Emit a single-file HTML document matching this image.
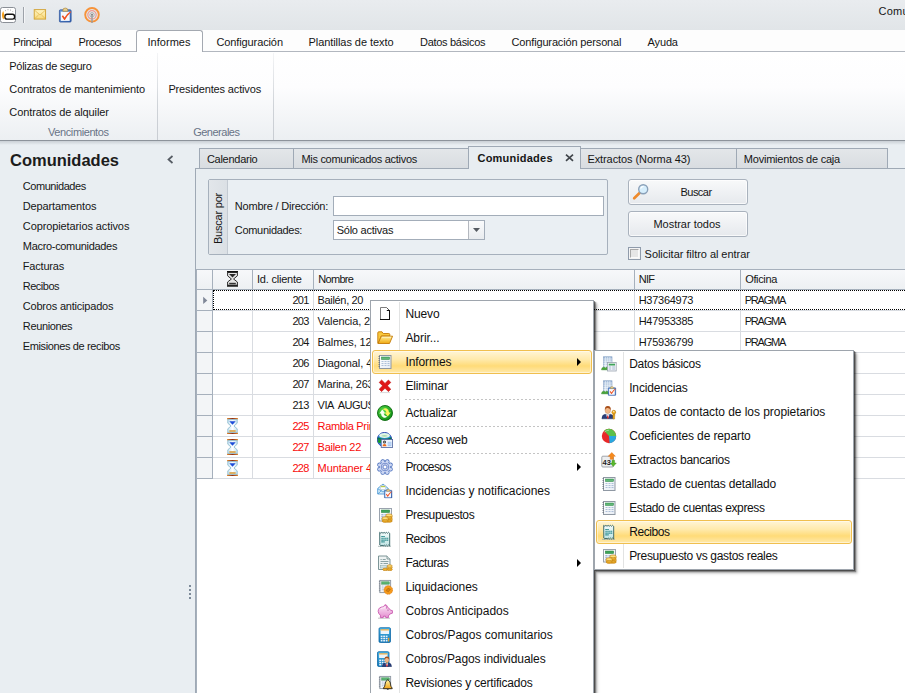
<!DOCTYPE html>
<html>
<head>
<meta charset="utf-8">
<style>
html,body{margin:0;padding:0;}
body{width:905px;height:693px;overflow:hidden;position:relative;background:#e9eef2;font-family:"Liberation Sans",sans-serif;font-size:11px;color:#161616;}
.abs{position:absolute;}
.ic{position:absolute;overflow:visible;}
.t{position:absolute;white-space:nowrap;line-height:14px;height:14px;font-size:11px;}
#topbar{left:0;top:0;width:905px;height:30px;background:linear-gradient(#e9ecef,#e1e5e8);}
#tabrow{left:0;top:30px;width:905px;height:21px;background:#fdfdfd;border-bottom:1px solid #b2b7bf;}
#acttab{left:136px;top:30px;width:65px;height:22px;background:#fff;border:1px solid #a4a9b1;border-bottom:none;border-radius:3px 3px 0 0;}
#ribbon{left:0;top:52px;width:905px;height:88px;background:linear-gradient(#ffffff 0%,#fdfdfe 40%,#eceff2 100%);border-bottom:1px solid #8d939b;}
.rsep{position:absolute;top:53px;width:1px;height:87px;background:linear-gradient(rgba(200,205,211,0.2),#cfd3d8 60%,#c8ccd2);}
.glabel{color:#687386;}
#nav{left:0;top:141px;width:195px;height:552px;background:#e9eef2;}
.navtitle{font-size:16.5px;font-weight:bold;line-height:20px;height:20px;color:#1c1c1c;}
#panel{left:195px;top:168px;width:710px;height:525px;background:#e8edf1;border-left:1px solid #9fa9b5;border-top:1px solid #9fa9b5;}
.dtab{position:absolute;top:148px;height:20px;background:linear-gradient(#e3e6e9,#d9dde1);border:1px solid #9fa9b5;border-bottom:none;box-sizing:border-box;}
#dtabact{position:absolute;left:468px;top:146px;width:113px;height:23px;background:#e8edf1;border:1px solid #9fa9b5;border-bottom:none;box-sizing:border-box;}
#grp{left:208px;top:179px;width:400px;height:76px;border:1px solid #a6b0bc;box-sizing:border-box;background:#eaeff3;border-radius:2px;}
#grpcap{left:209px;top:180px;width:19px;height:74px;background:linear-gradient(90deg,#e2e6ea,#dbe0e5);border-right:1px solid #c3cad2;box-sizing:border-box;}
.inp{position:absolute;background:#fff;border:1px solid #a3adb9;box-sizing:border-box;}
.btn{position:absolute;border:1px solid #a9b2bd;border-radius:3px;box-sizing:border-box;background:linear-gradient(#f8f9fa,#e6e9ed);box-shadow:inset 0 0 0 1px rgba(255,255,255,0.7);}
#grid{left:196px;top:269px;width:709px;height:424px;background:#fff;border-left:1px solid #a6b0bc;box-sizing:border-box;}
.gh{position:absolute;top:269px;height:21px;background:linear-gradient(#f7f8fa,#edf0f3);border-right:1px solid #a6b0bc;border-bottom:1px solid #a6b0bc;border-top:1px solid #a6b0bc;box-sizing:border-box;}
.hl{position:absolute;left:213px;width:692px;height:1px;background:#d9dce1;}
.vl{position:absolute;top:290px;width:1px;height:189px;background:#d9dce1;}
.red{color:#f80a0a;}
.ind{position:absolute;left:197px;width:16px;height:21px;background:#f3f5f7;border-right:1px solid #a6b0bc;border-bottom:1px solid #a6b0bc;box-sizing:border-box;}
.focus{position:absolute;left:213px;top:290px;width:692px;height:20px;border:1px dotted #000;border-right:none;box-sizing:border-box;}
.menu{position:absolute;background:#fff;border:1px solid #9ea5ad;box-sizing:border-box;box-shadow:1px 1px 0 rgba(0,0,0,0.40),2px 2px 1px rgba(0,0,0,0.30),3px 3px 2px rgba(0,0,0,0.20),4px 4px 3px rgba(0,0,0,0.10);}
.mi{position:absolute;font-size:12px;line-height:16px;height:16px;white-space:nowrap;color:#111;}
.msep{position:absolute;height:1px;background:repeating-linear-gradient(90deg,#c4c4c4 0,#c4c4c4 2px,transparent 2px,transparent 4px);}
.mhl{position:absolute;border:1px solid #f0bf4e;border-radius:3px;box-sizing:border-box;background:linear-gradient(#fff5d6 0%,#ffeaac 38%,#ffdb78 68%,#ffe9ab 100%);box-shadow:inset 0 0 0 1px rgba(255,255,255,0.45);}
.arrow{position:absolute;width:0;height:0;border-left:4px solid #000;border-top:4px solid transparent;border-bottom:4px solid transparent;}

.vtext{position:absolute;white-space:nowrap;font-size:11px;line-height:14px;height:14px;transform-origin:0 0;transform:rotate(-90deg);}
.cbtn{position:absolute;left:468px;top:221px;width:16px;height:18px;background:linear-gradient(#fafbfc,#e9ecef);border-left:1px solid #b4b8bf;box-sizing:border-box;}
.chk{position:absolute;left:628px;top:247px;width:13px;height:13px;box-sizing:border-box;border:1px solid #8f9bab;background:#f4f4f4;}
.chk i{position:absolute;left:1px;top:1px;width:9px;height:9px;box-sizing:border-box;background:#e6e6e6;border-top:1px solid #a8a8a8;border-left:1px solid #a8a8a8;border-right:1px solid #fafafa;border-bottom:1px solid #fafafa;}
#ribshadow{left:0;top:141px;width:905px;height:4px;background:linear-gradient(rgba(120,128,138,0.28),rgba(120,128,138,0));}
</style>
</head>
<body>
<svg width="0" height="0" style="position:absolute">
<defs>
<linearGradient id="gFold" x1="0" y1="0" x2="0" y2="1"><stop offset="0" stop-color="#fff09a"/><stop offset="1" stop-color="#f0a810"/></linearGradient>
<linearGradient id="gGold" x1="0" y1="0" x2="0" y2="1"><stop offset="0" stop-color="#fff6a8"/><stop offset="1" stop-color="#f2a418"/></linearGradient>
<linearGradient id="gBlue" x1="0" y1="0" x2="0" y2="1"><stop offset="0" stop-color="#49b4e6"/><stop offset="1" stop-color="#1279b8"/></linearGradient>
<linearGradient id="gSheet" x1="0" y1="0" x2="1" y2="1"><stop offset="0" stop-color="#ffffff"/><stop offset="1" stop-color="#e6ecf4"/></linearGradient>
<radialGradient id="gGreen" cx="0.4" cy="0.35" r="0.7"><stop offset="0" stop-color="#5fe04a"/><stop offset="1" stop-color="#0a8a12"/></radialGradient>
<linearGradient id="gClip" x1="0" y1="0" x2="1" y2="1"><stop offset="0" stop-color="#6ea0dc"/><stop offset="1" stop-color="#2f5fae"/></linearGradient>
<linearGradient id="gBld" x1="0" y1="0" x2="0" y2="1"><stop offset="0" stop-color="#9db7d8"/><stop offset="1" stop-color="#dfe8f3"/></linearGradient>
<linearGradient id="gPig" x1="0" y1="0" x2="0" y2="1"><stop offset="0" stop-color="#fdeaf8"/><stop offset="1" stop-color="#e48fd0"/></linearGradient>
<linearGradient id="gRec" x1="0" y1="0" x2="0" y2="1"><stop offset="0" stop-color="#f4fbfb"/><stop offset="1" stop-color="#bfe4e4"/></linearGradient>
<linearGradient id="gEnv" x1="0" y1="0" x2="0" y2="1"><stop offset="0" stop-color="#fff6c8"/><stop offset="1" stop-color="#f8d878"/></linearGradient>
<linearGradient id="gHg" x1="0" y1="0" x2="1" y2="0"><stop offset="0" stop-color="#c8e4f2"/><stop offset="0.5" stop-color="#ffffff"/><stop offset="1" stop-color="#c8e4f2"/></linearGradient>
<linearGradient id="gBar" x1="0" y1="0" x2="1" y2="0"><stop offset="0" stop-color="#e08a2e"/><stop offset="0.5" stop-color="#8e2f18"/><stop offset="1" stop-color="#e08a2e"/></linearGradient>

<symbol id="i-new" viewBox="0 0 16 16"><path d="M3.500 1.500h6l3 3v8.500h-9z" fill="#fff" stroke="none"/><path d="M3.500 13V1.500h6" fill="none" stroke="#7d7d7d" stroke-width="1"/><path d="M9.500 1.500l3 3" stroke="#555" stroke-width="1" fill="none"/><path d="M9.800 4.500h2.700" stroke="#111" stroke-width="1"/><path d="M3 13.500h10M12.500 4v10" stroke="#111" stroke-width="1" fill="none"/></symbol>

<symbol id="i-open" viewBox="0 0 16 16"><path d="M0.800 13.200V2.800q0-1 1-1h3.200l1.200 1.700h5.600q1 0 1 1V6H4.200L1.400 13.200z" fill="#f9c83c" stroke="#c47a08" stroke-width="0.900"/><path d="M1.100 13.500L4.300 6.200h11.300l-3.100 7.300z" fill="url(#gFold)" stroke="#c47a08" stroke-width="0.900"/><path d="M5 7.200h9" stroke="#fff8d0" stroke-width="0.800"/></symbol>

<symbol id="i-report" viewBox="0 0 16 16"><rect x="2.500" y="1.500" width="11.500" height="13" fill="url(#gSheet)" stroke="#8f98a3" stroke-width="1"/><path d="M1.500 2.500h1.500M1.500 4.500h1.500M1.500 6.500h1.500M1.500 8.500h1.500M1.500 10.500h1.500M1.500 12.500h1.500" stroke="#6f7782" stroke-width="0.900"/><rect x="4.500" y="3" width="8" height="2.500" fill="#49a862" stroke="#2f8a48" stroke-width="0.500"/><path d="M5 4.200h7" stroke="#8ad09c" stroke-width="0.600"/><path d="M4.500 7.500h2M7.500 7.500h2M10.500 7.500h2M4.500 9.500h2M7.500 9.500h2M10.500 9.500h2M4.500 11.500h2M7.500 11.500h2M10.500 11.500h2" stroke="#9db2d0" stroke-width="0.800"/></symbol>

<symbol id="i-del" viewBox="0 0 16 16"><path d="M2.2 4.4L4.6 2 8 5.4 11.4 2l2.4 2.4L10.4 7.8l3.4 3.4-2.4 2.4L8 10.2l-3.4 3.4-2.4-2.4L5.6 7.8z" fill="#e01818" stroke="#c00d0d" stroke-width="0.6"/><path d="M3 14.6h10" stroke="#cfcfcf" stroke-width="0.8"/></symbol>

<symbol id="i-refresh" viewBox="0 0 16 16"><circle cx="8" cy="8" r="7.500" fill="url(#gGreen)" stroke="#0b6a10" stroke-width="0.900"/><path d="M2.300 8.600L5.300 4.600 8.300 8.600H6.600Q7 11 10.200 11.400 8.600 13.200 6.400 12.400 4 11.400 4 8.600z" fill="#f6fff0"/><path d="M13.700 7.400L10.700 11.400 7.700 7.400H9.400Q9 5 5.800 4.600 7.400 2.800 9.600 3.600 12 4.600 12 7.400z" fill="#fff45e"/></symbol>

<symbol id="i-web" viewBox="0 0 16 16"><circle cx="7.500" cy="7.600" r="7.200" fill="#2b93dc" stroke="#2a3fae" stroke-width="0.900"/><path d="M1 5.200Q7.500 8.200 14 5.200q.6 1.200.6 2.600H.400q0-1.400.600-2.600z" fill="#0b7444"/><circle cx="2.800" cy="9.200" r="1.900" fill="#169a28"/><ellipse cx="7.500" cy="3.500" rx="5.400" ry="2.500" fill="#e2f5e6"/><path d="M4 3.900q3.500-1.800 7 0-3.500 1.600-7 0z" fill="#a8dcb0"/><rect x="4.200" y="7.400" width="11.400" height="8" fill="#eef4fc" stroke="#4d629c" stroke-width="0.800"/><circle cx="7.500" cy="10.100" r="1.500" fill="#3a3a3a"/><circle cx="7.500" cy="10" r="0.600" fill="#ddd"/><path d="M5.500 14.300q0-2.400 2-2.400t2 2.400z" fill="#ee6a18"/><rect x="10.700" y="9.800" width="3.700" height="4.400" fill="#a4c6f0"/><path d="M10.700 11h3.700M10.700 12.300h3.700" stroke="#dce9fa" stroke-width="0.500"/></symbol>

<symbol id="i-gear" viewBox="0 0 16 16"><g fill="#3f66b8" stroke="#3f66b8" stroke-width="1.400"><circle cx="13.45" cy="10.26" r="1.600"/><circle cx="10.26" cy="13.45" r="1.600"/><circle cx="5.74" cy="13.45" r="1.600"/><circle cx="2.55" cy="10.26" r="1.600"/><circle cx="2.55" cy="5.74" r="1.600"/><circle cx="5.74" cy="2.55" r="1.600"/><circle cx="10.26" cy="2.55" r="1.600"/><circle cx="13.45" cy="5.74" r="1.600"/><circle cx="8" cy="8" r="5.200"/></g><g fill="#cbd6f2"><circle cx="13.45" cy="10.26" r="1.600"/><circle cx="10.26" cy="13.45" r="1.600"/><circle cx="5.74" cy="13.45" r="1.600"/><circle cx="2.55" cy="10.26" r="1.600"/><circle cx="2.55" cy="5.74" r="1.600"/><circle cx="5.74" cy="2.55" r="1.600"/><circle cx="10.26" cy="2.55" r="1.600"/><circle cx="13.45" cy="5.74" r="1.600"/><circle cx="8" cy="8" r="5.300"/></g><circle cx="8" cy="8" r="3.800" fill="#eef1fb" stroke="#5574c0" stroke-width="0.800"/><circle cx="8" cy="8" r="2.300" fill="#b4c2ea" stroke="#5574c0" stroke-width="0.700"/><rect x="7" y="7" width="2" height="2" fill="#fff"/></symbol>

<symbol id="i-clip" viewBox="0 0 16 16"><rect x="1.500" y="2.500" width="12.500" height="13" rx="1" fill="url(#gClip)" stroke="#2a4f9a" stroke-width="0.800"/><rect x="3" y="4.500" width="9.500" height="9.800" fill="#f6f8fc"/><path d="M5.200 2.800q0-2.200 2.600-2.200t2.600 2.200v1.200H5.200z" fill="#e8cf8c" stroke="#a8843a" stroke-width="0.700"/><path d="M4 9.200l1.300-1 1.700 2.400Q9.600 6.400 13.400 4l.6.800Q10 8.400 7.400 13.200H6.600z" fill="#f0501e"/></symbol>

<symbol id="i-incid" viewBox="0 0 16 16"><path d="M.7 5.500L6 1l5.300 4.500V11H.7z" fill="#d4ecfa" stroke="#3a8ed0" stroke-width="0.800"/><rect x="3.300" y="2.500" width="5.400" height="4" fill="#fff" stroke="#9ab" stroke-width="0.400"/><rect x="3.800" y="3" width="4.400" height="1.200" fill="#b8cc4a"/><path d="M.9 5.800L6 9l5.200-3.200M1 10.800l3.600-3.400" stroke="#3a8ed0" stroke-width="0.700" fill="none"/><g transform="translate(6.500,5.800) scale(0.600)"><use href="#i-clip" width="16" height="16"/></g></symbol>

<symbol id="i-coins" viewBox="0 0 16 16"><g stroke="#b8740a" stroke-width="0.600"><ellipse cx="11.800" cy="13.800" rx="3.400" ry="1.500" fill="#f4b428"/><ellipse cx="11.800" cy="12.300" rx="3.400" ry="1.500" fill="#f9c848"/><ellipse cx="11.800" cy="10.800" rx="3.400" ry="1.500" fill="#f4b428"/><ellipse cx="11.800" cy="9.300" rx="3.400" ry="1.500" fill="#f9c848"/><ellipse cx="11.800" cy="7.800" rx="3.400" ry="1.500" fill="#ffe07a"/><ellipse cx="7.600" cy="13.900" rx="3.300" ry="1.500" fill="#f4b428"/><ellipse cx="7.600" cy="12.400" rx="3.300" ry="1.500" fill="#f9c848"/><ellipse cx="7.600" cy="10.900" rx="3.300" ry="1.500" fill="#ffe07a"/></g></symbol>

<symbol id="i-sheetg" viewBox="0 0 16 16"><rect x="2.500" y="1.500" width="12" height="12.500" fill="url(#gSheet)" stroke="#9aa3ae" stroke-width="1"/><rect x="4.300" y="3" width="8.400" height="2.600" fill="#3fa35a" stroke="#2c8545" stroke-width="0.500"/><path d="M4.300 7.800h2.200M7.500 7.800h2.200M10.700 7.800h2.200M4.300 9.800h2.200M7.500 9.800h2.200M4.300 11.800h2.200" stroke="#7f9cc6" stroke-width="1"/></symbol>

<symbol id="i-presup" viewBox="0 0 16 16"><use href="#i-sheetg" width="16" height="16"/><use href="#i-coins" x="1" y="1" width="15" height="15"/></symbol>

<symbol id="i-recibo" viewBox="0 0 16 16"><path d="M1 15.300h13" stroke="#9aa" stroke-width="0.800"/><path d="M2.700 1.300l1.100 1 1.100-1 1.100 1 1.100-1 1.100 1 1.100-1 1.100 1 1.100-1 1.100 1 .1 0V15l-1.100-1-1.100 1-1.100-1-1.100 1-1.100-1-1.100 1-1.100-1-1.100 1-1.100-1z" fill="url(#gRec)" stroke="#2f5f62" stroke-width="0.900"/><path d="M4.300 5.500h3.600M4.300 7.300h7M4.300 9.100h7M4.300 10.900h3.400" stroke="#2c8a8c" stroke-width="1.100" stroke-dasharray="1.600 0.300"/></symbol>

<symbol id="i-factura" viewBox="0 0 16 16"><path d="M1.500 1h8.500l3 3v10.500h-11.500z" fill="#eef3f3" stroke="#6f8a8c" stroke-width="0.900"/><path d="M10 1v3h3" fill="#dfe8e8" stroke="#6f8a8c" stroke-width="0.800"/><path d="M3.500 4.500h1.200M5.700 4.500h3M3.500 6.500h8M3.500 8.500h2M6.500 8.500h4.500" stroke="#7f9a9c" stroke-width="0.900"/><rect x="3.500" y="10.500" width="6" height="2.500" fill="#d4e2e2" stroke="#8aa" stroke-width="0.500"/><g stroke="#b8740a" stroke-width="0.600"><ellipse cx="8.300" cy="14.400" rx="2.600" ry="1.200" fill="#f4b428"/><ellipse cx="12.700" cy="14.400" rx="2.600" ry="1.200" fill="#f4b428"/><ellipse cx="12.700" cy="12.700" rx="2.600" ry="1.200" fill="#f9c848"/><ellipse cx="12.700" cy="11" rx="2.600" ry="1.200" fill="#ffe07a"/></g></symbol>

<symbol id="i-liquid" viewBox="0 0 16 16"><use href="#i-report" width="16" height="15"/><circle cx="11.300" cy="11" r="4.300" fill="#f59a1c" stroke="#e07808" stroke-width="0.700" stroke-dasharray="1.600 0.600"/><path d="M9 11.600l2-2.400 2.400 1-2 2.600z" fill="#d88412" stroke="#a85c08" stroke-width="0.500"/></symbol>

<symbol id="i-piggy" viewBox="0 0 16 16"><path d="M1 15.200h12" stroke="#aaa" stroke-width="0.700"/><path d="M1.200 8.500Q1 4 6.500 3.800L8 1.600q2.400.4 2.800 3 2.200 1 2.600 2.600l2 .4v2.600l-2.200.6q-.6 1.400-1.800 1.800v2H8.800l-.4-1.400H6.600l-.4 1.400H3.400v-2.400Q1.400 10.800 1.200 8.500z" fill="url(#gPig)" stroke="#c44aa8" stroke-width="0.800"/><path d="M8.200 2.200q1.800 1 1.600 3.600" stroke="#c44aa8" stroke-width="0.700" fill="none"/><circle cx="11" cy="7" r="0.600" fill="#8a2a78"/><path d="M4 5.500q2-1.200 4-.6" stroke="#fff" stroke-width="0.800" fill="none" opacity="0.800"/></symbol>

<symbol id="i-calc" viewBox="0 0 16 16"><rect x="2" y="0.700" width="11.500" height="14.800" rx="1.200" fill="url(#gBlue)" stroke="#0f6aa8" stroke-width="0.800"/><rect x="3.600" y="2.400" width="8.400" height="4.600" fill="#eaf4fb"/><rect x="3.600" y="2.400" width="8.400" height="1" fill="#f6a020"/><g fill="#e8f2fa"><rect x="3.700" y="8.600" width="1.800" height="1.500"/><rect x="6.200" y="8.600" width="1.800" height="1.500"/><rect x="8.700" y="8.600" width="1.800" height="1.500"/><rect x="3.700" y="10.800" width="1.800" height="1.500"/><rect x="6.200" y="10.800" width="1.800" height="1.500"/><rect x="8.700" y="10.800" width="1.800" height="1.500"/><rect x="3.700" y="13" width="1.800" height="1.500"/><rect x="6.200" y="13" width="1.800" height="1.500"/><rect x="8.700" y="13" width="1.800" height="1.500"/></g><rect x="11.100" y="10.800" width="1.200" height="3.700" fill="#f6a020"/></symbol>

<symbol id="i-person" viewBox="0 0 16 16"><path d="M1 15.500q0-4.500 3.500-5l3 1 3-1q3.500.5 3.500 5z" fill="#2a3f7a" stroke="#1c2c5a" stroke-width="0.500"/><path d="M6 10.500l1.500 1.200L9 10.500v2l-1.500 3-1.500-3z" fill="#f4f6fa"/><path d="M7 11.800h1l.5 3-1 .7-1-.7z" fill="#d81c1c"/><ellipse cx="7.500" cy="6.200" rx="3" ry="3.600" fill="#f2b888" stroke="#b87848" stroke-width="0.400"/><path d="M4.300 6q-.5-4.500 3.200-4.600T10.700 6q-.5-2.200-3.200-2.400T4.300 6z" fill="#a8501c"/></symbol>

<symbol id="i-calcperson" viewBox="0 0 16 16"><use href="#i-calc" x="-1.500" y="0" width="16" height="16"/><use href="#i-person" x="4.500" y="4.500" width="11.500" height="11.500"/></symbol>

<symbol id="i-revision" viewBox="0 0 16 16"><use href="#i-report" width="16" height="15"/><path d="M10.800 4.600q.7 0 .7.900 2 .7 2 3.600 0 2.400 1.700 4v.600H6.400v-.600q1.700-1.600 1.700-4 0-2.900 2-3.600 0-.900.700-.900z" fill="url(#gGold)" stroke="#111" stroke-width="0.800"/><path d="M9.600 14.300q1.200 1.500 2.400 0z" fill="#111"/></symbol>

<symbol id="i-building" viewBox="0 0 16 16"><rect x="2.500" y="0.800" width="8.500" height="12.700" fill="url(#gBld)" stroke="#7f9cc0" stroke-width="0.600"/><path d="M4.600 1v12.500M6.700 1v12.500M8.800 1v12.500M2.500 3h8.500M2.500 5.200h8.500M2.500 7.400h8.500M2.500 9.600h8.500" stroke="#f4f8fc" stroke-width="0.600"/><path d="M.5 13.800q.2-2.600 2.200-2.600 1.200 0 1.600 1 .4-1 1.600-1 2 0 2 2.600z" fill="#4aa838" stroke="#2f8422" stroke-width="0.500"/></symbol>

<symbol id="s-datos" viewBox="0 0 16 16"><use href="#i-building" width="16" height="16"/><rect x="6.500" y="6.500" width="8.700" height="8.500" fill="#f4f6fa" stroke="#9aa3ae" stroke-width="0.800"/><rect x="7.700" y="7.700" width="6.300" height="1.800" fill="#3fa35a"/><path d="M7.700 11h2.500M11.200 11h2.800M7.700 13h2.500M11.200 13h2.800" stroke="#9ab0cc" stroke-width="0.900"/></symbol>

<symbol id="s-incid" viewBox="0 0 16 16"><use href="#i-building" width="16" height="16"/><g transform="translate(6.300,6.200) scale(0.600)"><use href="#i-clip" width="16" height="16"/></g></symbol>

<symbol id="s-contact" viewBox="0 0 16 16"><use href="#i-person" x="0" y="0" width="14.500" height="16"/><g fill="#f4b020" stroke="#b8780a" stroke-width="0.600"><circle cx="12.800" cy="8.200" r="1.900"/><path d="M12 10v4.500l.8.800.9-.8v-1l-.6-.5.600-.6V10z"/></g><circle cx="12.800" cy="7.700" r="0.600" fill="#fff"/></symbol>

<symbol id="s-pie" viewBox="0 0 16 16"><circle cx="8" cy="8" r="7.200" fill="#e82828"/><path d="M8 8V.8A7.200 7.200 0 0 1 15.200 8z" fill="#5cc04a"/><path d="M8 8h7.200A7.200 7.200 0 0 1 8.600 15.200z" fill="#28a8e0"/><path d="M8 8L3 2.800A7.200 7.200 0 0 1 8 .8z" fill="#5cc04a"/><path d="M3.400 4.200q2-2 4.600-2" stroke="#fff" stroke-width="0.800" opacity="0.500" fill="none"/></symbol>

<symbol id="s-43" viewBox="0 0 16 16"><rect x="0.800" y="4.200" width="11.500" height="10.800" rx="1" fill="#eceef0" stroke="#8a8f96" stroke-width="0.800"/><text x="1.600" y="12.600" font-family="Liberation Sans" font-weight="bold" font-size="7.500" fill="#222">43</text><path d="M10.800 0.500l3.600 3.800h-2v3h-3.200v-3h-2z" fill="#f68a1c" stroke="#d86808" stroke-width="0.400"/><path d="M12.300 14.500l-3-3.400h1.700V8.300h2.600v2.800h1.700z" fill="#58b82c" stroke="#3a8a1c" stroke-width="0.400"/></symbol>

<symbol id="t-app" viewBox="0 0 16 16"><rect x="0.500" y="0.500" width="15" height="15" rx="2" fill="#fff" stroke="#8a8f96" stroke-width="1"/><path d="M7 7.300h5.400q2.200 0 2.200 2.400T12.400 12.100H7q-2.200 0-2.200-2.400T7 7.300z" fill="none" stroke="#111" stroke-width="1.400"/><path d="M14.200 11.300l.9 1.300" stroke="#111" stroke-width="1"/><path d="M3.200 4q-2.600 4 0 8.600 1.500-1 1.100-4.200T3.200 4z" fill="#f7a21e"/><path d="M5.400 3.700l.6-.4M7.600 2.700h.8M10.200 3l.7.200M12.500 4.300l.5.500" stroke="#666" stroke-width="0.800"/></symbol>

<symbol id="t-mail" viewBox="0 0 14 12"><rect x="0.700" y="0.700" width="12.400" height="10.300" fill="url(#gEnv)" stroke="#d0a030" stroke-width="1"/><path d="M1 1.200l6 5.400 6-5.400M1 10.800l4.500-4.400M13 10.800L8.500 6.400" stroke="#e0b448" stroke-width="0.800" fill="none"/></symbol>

<symbol id="t-radio" viewBox="0 0 16 16"><circle cx="8" cy="7.800" r="6.800" fill="none" stroke="#f7933a" stroke-width="1.900"/><circle cx="8" cy="7.800" r="4.200" fill="none" stroke="#f09a90" stroke-width="1.200"/><circle cx="8" cy="7.800" r="2.200" fill="#ececec" stroke="#a0a0a0" stroke-width="0.800"/><rect x="7.300" y="8" width="1.400" height="8" fill="#9a9a9a"/><circle cx="8" cy="7.600" r="0.800" fill="#666"/></symbol>

<symbol id="g-hgbw" viewBox="0 0 11 16"><path d="M0.600 1.400v3.400L4.400 8 0.600 11v3.200h9.800V11L6.600 8l3.800-3.200V1.400z" fill="#e4e4e4" stroke="#1a1a1a" stroke-width="0.900"/><rect x="0" y="0" width="11" height="1.500" fill="#111"/><rect x="0" y="14.200" width="11" height="1.500" fill="#111"/><path d="M2 3h7L5.500 6.600z" fill="#2a2a2a"/><rect x="2.200" y="11.800" width="6.600" height="1.500" fill="#333"/></symbol>

<symbol id="g-hg" viewBox="0 0 11 16"><rect x="0" y="0" width="11" height="1.600" rx="0.500" fill="url(#gBar)"/><rect x="0" y="14.400" width="11" height="1.600" rx="0.500" fill="url(#gBar)"/><path d="M.8 1.600v3.600L4 8 .8 10.800v3.600h9.400v-3.600L7 8l3.200-2.800V1.600z" fill="url(#gHg)" stroke="#86b8cc" stroke-width="0.800"/><path d="M2.300 3.200h6.400L5.500 6.800z" fill="#1c4cd8"/><rect x="2.300" y="12.200" width="6.400" height="1.600" fill="#d8a040"/></symbol>
</defs>
</svg>

<div id="topbar" class="abs"></div>
<div id="tabrow" class="abs"></div>
<div id="acttab" class="abs"></div>
<div id="ribbon" class="abs"></div>
<div class="rsep" style="left:157px"></div>
<div class="rsep" style="left:273px"></div>
<div id="nav" class="abs"></div>
<div id="ribshadow" class="abs"></div>
<div class="dtab" style="left:199px;width:95px"></div>
<div class="dtab" style="left:293px;width:176px"></div>
<div class="dtab" style="left:580px;width:157px"></div>
<div class="dtab" style="left:736px;width:152px"></div>
<div id="panel" class="abs"></div>
<div id="dtabact"></div>
<div id="grp" class="abs"></div>
<div id="grpcap" class="abs"></div>
<div class="inp" style="left:333px;top:196px;width:271px;height:20px"></div>
<div class="inp" style="left:333px;top:220px;width:152px;height:20px"></div>
<div class="btn" style="left:628px;top:179px;width:120px;height:26px"></div>
<div class="btn" style="left:628px;top:211px;width:120px;height:26px"></div>
<div id="grid" class="abs"></div>
<div class="gh" style="left:197px;width:16px"></div>
<div class="gh" style="left:213px;width:40px"></div>
<div class="gh" style="left:253px;width:61px"></div>
<div class="gh" style="left:314px;width:321px"></div>
<div class="gh" style="left:635px;width:106px"></div>
<div class="gh" style="left:741px;width:164px;border-right:none"></div>
<div class="ind" style="top:290px"></div>
<div class="ind" style="top:311px"></div>
<div class="ind" style="top:332px"></div>
<div class="ind" style="top:353px"></div>
<div class="ind" style="top:374px"></div>
<div class="ind" style="top:395px"></div>
<div class="ind" style="top:416px"></div>
<div class="ind" style="top:437px"></div>
<div class="ind" style="top:458px"></div>
<div class="hl" style="top:310px"></div>
<div class="hl" style="top:331px"></div>
<div class="hl" style="top:352px"></div>
<div class="hl" style="top:373px"></div>
<div class="hl" style="top:394px"></div>
<div class="hl" style="top:415px"></div>
<div class="hl" style="top:436px"></div>
<div class="hl" style="top:457px"></div>
<div class="hl" style="top:478px"></div>
<div class="vl" style="left:252px"></div>
<div class="vl" style="left:313px"></div>
<div class="vl" style="left:634px"></div>
<div class="vl" style="left:740px"></div>
<div class="focus"></div>
<div class="vtext" style="left:210.500px;top:243.600px;letter-spacing:-0.220px">Buscar por</div>
<div class="cbtn"></div>
<svg class="ic" style="left:473px;top:228px" width="7" height="4"><path d="M0 0h7L3.500 4z" fill="#555a61"/></svg>
<svg class="ic" style="left:565px;top:154px" width="9" height="8"><path d="M1 0.700L8 6.800M8 0.700L1 6.800" stroke="#40454b" stroke-width="1.700"/></svg>
<svg class="ic" style="left:167px;top:155px" width="7" height="9"><path d="M5.500 1L1.500 4.500 5.500 8" stroke="#555b63" stroke-width="1.700" fill="none"/></svg>
<div class="chk"><i></i></div>
<svg class="ic" style="left:632px;top:184px" width="17" height="16" viewBox="0 0 17 16"><path d="M7.800 8.800L2.200 14.200" stroke="#ee8a2c" stroke-width="2.700" stroke-linecap="round"/><circle cx="11.200" cy="5.300" r="4.500" fill="#d6eefc" stroke="#8aa0b8" stroke-width="1.400"/><path d="M8.600 4.600q.8-2.200 3-2.200" stroke="#fff" stroke-width="1.100" fill="none"/></svg>
<svg class="ic" style="left:189px;top:585px" width="2" height="14"><g fill="#7d8a99"><rect x="0" y="0" width="2" height="2"/><rect x="0" y="4" width="2" height="2"/><rect x="0" y="8" width="2" height="2"/><rect x="0" y="12" width="2" height="2"/></g></svg>

<div class="t" style="left:13.3px;top:35px;letter-spacing:-0.436px;">Principal</div>
<div class="t" style="left:78.5px;top:35px;letter-spacing:-0.408px;">Procesos</div>
<div class="t" style="left:147.5px;top:35px;letter-spacing:0.029px;">Informes</div>
<div class="t" style="left:216.5px;top:35px;letter-spacing:-0.115px;">Configuración</div>
<div class="t" style="left:308.5px;top:35px;letter-spacing:-0.068px;">Plantillas de texto</div>
<div class="t" style="left:420.0px;top:35px;letter-spacing:-0.299px;">Datos básicos</div>
<div class="t" style="left:511.5px;top:35px;letter-spacing:-0.150px;">Configuración personal</div>
<div class="t" style="left:647.5px;top:35px;letter-spacing:-0.125px;">Ayuda</div>
<div class="t" style="left:878.5px;top:3.5px;letter-spacing:0.25px">Comu</div>
<div class="t" style="left:9.3px;top:59px;letter-spacing:-0.310px;">Pólizas de seguro</div>
<div class="t" style="left:9.3px;top:82px;letter-spacing:-0.092px;">Contratos de mantenimiento</div>
<div class="t" style="left:9.3px;top:105px;letter-spacing:-0.091px;">Contratos de alquiler</div>
<div class="t glabel" style="left:48.0px;top:125px;letter-spacing:-0.403px;">Vencimientos</div>
<div class="t" style="left:168.4px;top:82px;letter-spacing:-0.144px;">Presidentes activos</div>
<div class="t glabel" style="left:193.2px;top:125px;letter-spacing:-0.496px;">Generales</div>
<div class="t navtitle" style="left:10.0px;top:150px;letter-spacing:-0.011px;">Comunidades</div>
<div class="t" style="left:22.8px;top:179px;letter-spacing:-0.447px;">Comunidades</div>
<div class="t" style="left:22.8px;top:199px;letter-spacing:-0.135px;">Departamentos</div>
<div class="t" style="left:22.8px;top:219px;letter-spacing:-0.107px;">Copropietarios activos</div>
<div class="t" style="left:22.8px;top:239px;letter-spacing:-0.316px;">Macro-comunidades</div>
<div class="t" style="left:22.8px;top:259px;letter-spacing:-0.200px;">Facturas</div>
<div class="t" style="left:22.8px;top:279px;letter-spacing:-0.508px;">Recibos</div>
<div class="t" style="left:22.8px;top:299px;letter-spacing:-0.204px;">Cobros anticipados</div>
<div class="t" style="left:22.8px;top:319px;letter-spacing:-0.362px;">Reuniones</div>
<div class="t" style="left:22.8px;top:339px;letter-spacing:-0.372px;">Emisiones de recibos</div>
<div class="t" style="left:206.9px;top:152px;letter-spacing:-0.267px;">Calendario</div>
<div class="t" style="left:301.4px;top:152px;letter-spacing:-0.290px;">Mis comunicados activos</div>
<div class="t" style="left:477.5px;top:151px;letter-spacing:0.227px;font-weight:bold">Comunidades</div>
<div class="t" style="left:587.4px;top:152px;letter-spacing:-0.081px;">Extractos (Norma 43)</div>
<div class="t" style="left:743.8px;top:152px;letter-spacing:-0.216px;">Movimientos de caja</div>
<div class="t" style="left:234.8px;top:199px;letter-spacing:-0.206px;">Nombre / Dirección:</div>
<div class="t" style="left:234.8px;top:223px;letter-spacing:-0.303px;">Comunidades:</div>
<div class="t" style="left:336.7px;top:223px;letter-spacing:-0.238px;">Sólo activas</div>
<div class="t" style="left:680.5px;top:185px;letter-spacing:-0.530px;">Buscar</div>
<div class="t" style="left:653.4px;top:217px;letter-spacing:-0.012px;">Mostrar todos</div>
<div class="t" style="left:644.6px;top:247px;letter-spacing:-0.043px;">Solicitar filtro al entrar</div>
<div class="t" style="left:257.0px;top:272px;letter-spacing:-0.219px;">Id. cliente</div>
<div class="t" style="left:318.2px;top:272px;letter-spacing:-0.665px;">Nombre</div>
<div class="t" style="left:638.7px;top:272px;letter-spacing:-0.667px;">NIF</div>
<div class="t" style="left:745.2px;top:272px;letter-spacing:-0.358px;">Oficina</div>
<div class="t" style="left:292.4px;top:293px;letter-spacing:-0.680px;">201</div>
<div class="t" style="left:317.6px;top:293px;letter-spacing:-0.338px;">Bailén, 20</div>
<div class="t" style="left:638.7px;top:293px;letter-spacing:-0.274px;">H37364973</div>
<div class="t" style="left:744.7px;top:293px;letter-spacing:-1.198px;">PRAGMA</div>
<div class="t" style="left:292.4px;top:314px;letter-spacing:-0.680px;">203</div>
<div class="t" style="left:317.6px;top:314px;letter-spacing:-0.1px;">Valencia, 234</div>
<div class="t" style="left:638.7px;top:314px;letter-spacing:-0.274px;">H47953385</div>
<div class="t" style="left:744.7px;top:314px;letter-spacing:-1.198px;">PRAGMA</div>
<div class="t" style="left:292.4px;top:335px;letter-spacing:-0.680px;">204</div>
<div class="t" style="left:317.6px;top:335px;letter-spacing:-0.1px;">Balmes, 120</div>
<div class="t" style="left:638.7px;top:335px;letter-spacing:-0.274px;">H75936799</div>
<div class="t" style="left:744.7px;top:335px;letter-spacing:-1.198px;">PRAGMA</div>
<div class="t" style="left:292.4px;top:356px;letter-spacing:-0.680px;">206</div>
<div class="t" style="left:317.6px;top:356px;letter-spacing:-0.1px;">Diagonal, 455</div>
<div class="t" style="left:638.7px;top:356px;letter-spacing:-0.274px;">H44886372</div>
<div class="t" style="left:744.7px;top:356px;letter-spacing:-1.198px;">PRAGMA</div>
<div class="t" style="left:292.4px;top:377px;letter-spacing:-0.680px;">207</div>
<div class="t" style="left:317.6px;top:377px;letter-spacing:-0.2px;">Marina, 263</div>
<div class="t" style="left:638.7px;top:377px;letter-spacing:-0.274px;">H22839458</div>
<div class="t" style="left:744.7px;top:377px;letter-spacing:-1.198px;">PRAGMA</div>
<div class="t" style="left:292.4px;top:398px;letter-spacing:-0.680px;">213</div>
<div class="t" style="left:317.6px;top:398px;letter-spacing:-0.5px;word-spacing:2.5px">VIA AUGUSTA 51</div>
<div class="t" style="left:638.7px;top:398px;letter-spacing:-0.274px;">H80928374</div>
<div class="t" style="left:744.7px;top:398px;letter-spacing:-1.198px;">PRAGMA</div>
<div class="t red" style="left:292.4px;top:419px;letter-spacing:-0.680px;">225</div>
<div class="t red" style="left:317.6px;top:419px;letter-spacing:-0.32px;">Rambla Principal 8</div>
<div class="t red" style="left:638.7px;top:419px;letter-spacing:-0.274px;">H60192837</div>
<div class="t red" style="left:744.7px;top:419px;letter-spacing:-1.198px;">PRAGMA</div>
<div class="t red" style="left:292.4px;top:440px;letter-spacing:-0.680px;">227</div>
<div class="t red" style="left:317.6px;top:440px;letter-spacing:-0.272px;">Bailen 22</div>
<div class="t red" style="left:638.7px;top:440px;letter-spacing:-0.274px;">H70019283</div>
<div class="t red" style="left:744.7px;top:440px;letter-spacing:-1.198px;">PRAGMA</div>
<div class="t red" style="left:292.4px;top:461px;letter-spacing:-0.680px;">228</div>
<div class="t red" style="left:317.6px;top:461px;letter-spacing:-0.12px;">Muntaner 45</div>
<div class="t red" style="left:638.7px;top:461px;letter-spacing:-0.274px;">H55512093</div>
<div class="t red" style="left:744.7px;top:461px;letter-spacing:-1.198px;">PRAGMA</div>
<svg class="ic" style="left:0px;top:7px" width="16" height="16"><use href="#t-app"/></svg>
<div class="abs" style="left:23px;top:7px;width:1px;height:16px;background:#9da2a9"></div><div class="abs" style="left:24px;top:7px;width:1px;height:16px;background:#f4f5f7"></div>
<svg class="ic" style="left:33px;top:9px" width="14" height="11"><use href="#t-mail"/></svg>
<svg class="ic" style="left:58px;top:7px" width="15" height="16"><use href="#i-clip"/></svg>
<svg class="ic" style="left:84px;top:7px" width="16" height="16"><use href="#t-radio"/></svg>
<svg class="ic" style="left:227px;top:271px" width="11" height="16"><use href="#g-hgbw"/></svg>
<svg class="ic" style="left:227px;top:418px" width="11" height="16"><use href="#g-hg"/></svg>
<svg class="ic" style="left:227px;top:439px" width="11" height="16"><use href="#g-hg"/></svg>
<svg class="ic" style="left:227px;top:460px" width="11" height="16"><use href="#g-hg"/></svg>
<svg class="ic" style="left:203px;top:296px" width="5" height="9"><path d="M0.200 0.800L4.300 4.400 0.200 8z" fill="#7f8797"/></svg>
<div class="menu" style="left:370px;top:300px;width:224px;height:420px"></div>
<div class="abs" style="left:399px;top:302px;width:1px;height:400px;background:#e2e3e3"></div>
<div class="mhl" style="left:372px;top:350px;width:220px;height:24px"></div>
<div class="msep" style="left:405px;top:399px;width:187px"></div>
<div class="msep" style="left:405px;top:426px;width:187px"></div>
<div class="msep" style="left:405px;top:453px;width:187px"></div>
<div class="menu" style="left:594px;top:350px;width:260px;height:220px"></div>
<div class="abs" style="left:623px;top:352px;width:1px;height:216px;background:#e2e3e3"></div>
<div class="mhl" style="left:596px;top:520px;width:256px;height:24px"></div>

<div class="mi" style="left:405.4px;top:306px;letter-spacing:-0.097px;">Nuevo</div>
<div class="mi" style="left:405.4px;top:330px;letter-spacing:-0.055px;">Abrir...</div>
<div class="mi" style="left:405.4px;top:354px;letter-spacing:-0.084px;">Informes</div>
<div class="mi" style="left:405.4px;top:378px;letter-spacing:-0.121px;">Eliminar</div>
<div class="mi" style="left:405.4px;top:405px;letter-spacing:-0.121px;">Actualizar</div>
<div class="mi" style="left:405.4px;top:432px;letter-spacing:-0.278px;">Acceso web</div>
<div class="mi" style="left:405.4px;top:459px;letter-spacing:-0.562px;">Procesos</div>
<div class="mi" style="left:405.4px;top:483px;letter-spacing:-0.030px;">Incidencias y notificaciones</div>
<div class="mi" style="left:405.4px;top:507px;letter-spacing:-0.372px;">Presupuestos</div>
<div class="mi" style="left:405.4px;top:531px;letter-spacing:-0.493px;">Recibos</div>
<div class="mi" style="left:405.4px;top:555px;letter-spacing:-0.455px;">Facturas</div>
<div class="mi" style="left:405.4px;top:579px;letter-spacing:-0.083px;">Liquidaciones</div>
<div class="mi" style="left:405.4px;top:603px;letter-spacing:-0.000px;">Cobros Anticipados</div>
<div class="mi" style="left:405.4px;top:627px;letter-spacing:-0.000px;">Cobros/Pagos comunitarios</div>
<div class="mi" style="left:405.4px;top:651px;letter-spacing:-0.075px;">Cobros/Pagos individuales</div>
<div class="mi" style="left:405.4px;top:675px;letter-spacing:-0.194px;">Revisiones y certificados</div>
<div class="mi" style="left:629.2px;top:356px;letter-spacing:-0.306px;">Datos básicos</div>
<div class="mi" style="left:629.2px;top:380px;letter-spacing:-0.155px;">Incidencias</div>
<div class="mi" style="left:629.2px;top:404px;letter-spacing:-0.056px;">Datos de contacto de los propietarios</div>
<div class="mi" style="left:629.2px;top:428px;letter-spacing:-0.113px;">Coeficientes de reparto</div>
<div class="mi" style="left:629.2px;top:452px;letter-spacing:-0.255px;">Extractos bancarios</div>
<div class="mi" style="left:629.2px;top:476px;letter-spacing:-0.175px;">Estado de cuentas detallado</div>
<div class="mi" style="left:629.2px;top:500px;letter-spacing:-0.374px;">Estado de cuentas express</div>
<div class="mi" style="left:629.2px;top:524px;letter-spacing:-0.427px;">Recibos</div>
<div class="mi" style="left:629.2px;top:548px;letter-spacing:-0.327px;">Presupuesto vs gastos reales</div>
<svg class="ic" style="left:377px;top:306px" width="16" height="16"><use href="#i-new"/></svg>
<svg class="ic" style="left:377px;top:330px" width="16" height="16"><use href="#i-open"/></svg>
<svg class="ic" style="left:377px;top:354px" width="16" height="16"><use href="#i-report"/></svg>
<div class="arrow" style="left:577px;top:358px"></div>
<svg class="ic" style="left:377px;top:378px" width="16" height="16"><use href="#i-del"/></svg>
<svg class="ic" style="left:377px;top:405px" width="16" height="16"><use href="#i-refresh"/></svg>
<svg class="ic" style="left:377px;top:432px" width="16" height="16"><use href="#i-web"/></svg>
<svg class="ic" style="left:377px;top:459px" width="16" height="16"><use href="#i-gear"/></svg>
<div class="arrow" style="left:577px;top:463px"></div>
<svg class="ic" style="left:377px;top:483px" width="16" height="16"><use href="#i-incid"/></svg>
<svg class="ic" style="left:377px;top:507px" width="16" height="16"><use href="#i-presup"/></svg>
<svg class="ic" style="left:377px;top:531px" width="16" height="16"><use href="#i-recibo"/></svg>
<svg class="ic" style="left:377px;top:555px" width="16" height="16"><use href="#i-factura"/></svg>
<div class="arrow" style="left:577px;top:559px"></div>
<svg class="ic" style="left:377px;top:579px" width="16" height="16"><use href="#i-liquid"/></svg>
<svg class="ic" style="left:377px;top:603px" width="16" height="16"><use href="#i-piggy"/></svg>
<svg class="ic" style="left:377px;top:627px" width="16" height="16"><use href="#i-calc"/></svg>
<svg class="ic" style="left:377px;top:651px" width="16" height="16"><use href="#i-calcperson"/></svg>
<svg class="ic" style="left:377px;top:675px" width="16" height="16"><use href="#i-revision"/></svg>
<svg class="ic" style="left:601px;top:356px" width="16" height="16"><use href="#s-datos"/></svg>
<svg class="ic" style="left:601px;top:380px" width="16" height="16"><use href="#s-incid"/></svg>
<svg class="ic" style="left:601px;top:404px" width="16" height="16"><use href="#s-contact"/></svg>
<svg class="ic" style="left:601px;top:428px" width="16" height="16"><use href="#s-pie"/></svg>
<svg class="ic" style="left:601px;top:452px" width="16" height="16"><use href="#s-43"/></svg>
<svg class="ic" style="left:601px;top:476px" width="16" height="16"><use href="#i-report"/></svg>
<svg class="ic" style="left:601px;top:500px" width="16" height="16"><use href="#i-report"/></svg>
<svg class="ic" style="left:601px;top:524px" width="16" height="16"><use href="#i-recibo"/></svg>
<svg class="ic" style="left:601px;top:548px" width="16" height="16"><use href="#i-presup"/></svg>
</body>
</html>
